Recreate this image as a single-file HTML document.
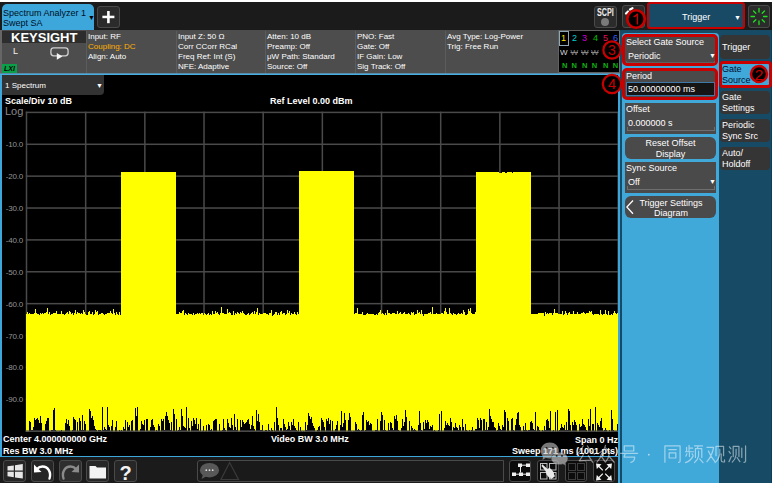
<!DOCTYPE html>
<html><head><meta charset="utf-8">
<style>
*{margin:0;padding:0;box-sizing:border-box}
html,body{width:773px;height:485px;overflow:hidden;background:#fff}
body{position:relative;font-family:"Liberation Sans",sans-serif;color:#fff}
.a{position:absolute}
.t{position:absolute;white-space:nowrap;line-height:1}
.yl{position:absolute;left:2px;width:21px;text-align:right;font-size:8px;letter-spacing:-0.2px;color:#959595;line-height:12px;white-space:nowrap}
.ann{position:absolute;overflow:visible}
.hd{position:absolute;font-size:8px;line-height:10px;color:#fff;white-space:nowrap;top:32px!important}
.sep{position:absolute;top:31px;width:1px;height:42px;background:#5c5c5c}
.sk{position:absolute;left:720px;width:50px;background:#353535;border-radius:4px;font-size:9px;line-height:11px;padding:1px 0 0 2px;color:#fff}
.ctl{position:absolute;left:625px;width:91px;background:#4a4a4a;font-size:9px;color:#fff}
.btn{position:absolute;background:#2b2b2b;border:1px solid #4a4a4a;border-radius:3px}
</style></head><body>
<!-- top bar -->
<div class="a" style="left:0;top:2px;width:772px;height:28px;background:#1b1b1b"></div>
<div class="a" style="left:2px;top:4px;width:92px;height:27px;background:#3da7db;border-radius:5px 5px 0 0"></div>
<div class="t" style="left:3px;top:8px;font-size:9px;color:#001028;line-height:10px">Spectrum Analyzer 1<br>Swept SA</div>
<div class="t" style="left:88px;top:14px;font-size:7px;color:#000">&#9660;</div>
<div class="btn" style="left:97px;top:6px;width:23px;height:22px"></div>
<svg class="a" style="left:97px;top:6px" width="23" height="22"><rect x="5.4" y="9.7" width="12" height="2.5" fill="#fff"/><rect x="10.1" y="5" width="2.6" height="12.2" fill="#fff"/></svg>

<div class="btn" style="left:594px;top:6px;width:23px;height:22px"></div>
<div class="t" style="left:597px;top:8px;font-size:10px;font-weight:bold;color:#eee;transform:scaleX(0.72);transform-origin:0 0">SCPI</div>
<div class="a" style="left:601px;top:18px;width:8px;height:8px;border-radius:50%;background:#7a7a7a"></div>
<div class="btn" style="left:622px;top:5px;width:23px;height:23px"></div>
<svg class="a" style="left:622px;top:5px" width="23" height="23"><path d="M4 8.5 L6 6.5 M8 4.5 L10.5 3.2" stroke="#fff" stroke-width="2.2" stroke-linecap="round"/></svg>

<div class="a" style="left:647px;top:2px;width:98px;height:27px;background:#184a66;border:2.5px solid #c80000;border-radius:3px"></div>
<div class="t" style="left:682px;top:13px;font-size:9px;color:#fff">Trigger</div>
<div class="t" style="left:734px;top:14px;font-size:7px;color:#fff">&#9660;</div>
<div class="btn" style="left:748px;top:5px;width:22px;height:23px"></div>
<svg class="a" style="left:748px;top:5px" width="22" height="23" viewBox="0 0 22 23">
<g stroke="#1ee01e" stroke-width="1.3" stroke-linecap="round">
<line x1="11" y1="3.5" x2="11" y2="7"/><line x1="11" y1="16" x2="11" y2="19.5"/>
<line x1="3" y1="11.5" x2="6.5" y2="11.5"/><line x1="15.5" y1="11.5" x2="19" y2="11.5"/>
<line x1="5.5" y1="6" x2="7.8" y2="8.3"/><line x1="14.2" y1="14.7" x2="16.5" y2="17"/>
<line x1="16.5" y1="6" x2="14.2" y2="8.3"/><line x1="7.8" y1="14.7" x2="5.5" y2="17"/>
</g></svg>

<!-- header -->
<div class="a" style="left:0;top:30px;width:620px;height:43px;background:#4d4d4d"></div>
<div class="a" style="left:0;top:30px;width:2px;height:43px;background:#666"></div>
<div class="a" style="left:2px;top:31px;width:84px;height:12px;background:#2d2d2d"></div>
<div class="t" style="left:11px;top:31px;font-size:13px;font-weight:bold;color:#fff;line-height:13px">KEYSIGHT</div>
<div class="t" style="left:13px;top:47px;font-size:9px;color:#f0f0f0">L</div>
<svg class="a" style="left:44px;top:42px" width="30" height="20" viewBox="44 42 30 20"><rect x="50.9" y="47.9" width="17.2" height="8" rx="2.8" fill="none" stroke="#d0d0d0" stroke-width="1.3"/><path d="M56.8 53 L56.8 59.8 L62.4 56.4 Z" fill="#f4f4f4"/></svg>
<div class="a" style="left:2px;top:64px;width:15px;height:9px;background:#0aa04a"></div>
<div class="t" style="left:4px;top:65px;font-size:7px;font-style:italic;font-weight:bold;color:#000">LXI</div>
<div class="sep" style="left:86px"></div>
<div class="sep" style="left:176px"></div>
<div class="sep" style="left:265px"></div>
<div class="sep" style="left:355px"></div>
<div class="sep" style="left:445px"></div>
<div class="hd" style="left:88px;top:31px">Input: RF<br><span style="color:#ffb000">Coupling: DC</span><br>Align: Auto</div>
<div class="hd" style="left:178px;top:31px">Input Z: 50 &#937;<br>Corr CCorr RCal<br>Freq Ref: Int (S)<br>NFE: Adaptive</div>
<div class="hd" style="left:267px;top:31px">Atten: 10 dB<br>Preamp: Off<br>&#956;W Path: Standard<br>Source: Off</div>
<div class="hd" style="left:357px;top:31px">PNO: Fast<br>Gate: Off<br>IF Gain: Low<br>Sig Track: Off</div>
<div class="hd" style="left:447px;top:31px">Avg Type: Log-Power<br>Trig: Free Run</div>
<!-- trace indicator -->
<div class="a" style="left:558px;top:30px;width:62px;height:43px;background:#000;border:1px solid #606060;border-right:1px solid #707070"></div>
<div class="a" style="left:559px;top:31px;width:10px;height:15px;border:1px solid #8fa8b8"></div>
<div class="t" style="left:561px;top:34px;font-size:9px;color:#ffe000">1</div>
<div class="t" style="left:572px;top:34px;font-size:9px;color:#00d0d0">2</div>
<div class="t" style="left:582px;top:34px;font-size:9px;color:#d000d0">3</div>
<div class="t" style="left:593px;top:34px;font-size:9px;color:#00c000">4</div>
<div class="t" style="left:603px;top:34px;font-size:9px;color:#e0105a">5</div>
<div class="t" style="left:613px;top:34px;font-size:9px;color:#3060ff">6</div>
<div class="t" style="left:560px;top:49px;font-size:8px;color:#ddd">W</div>
<div class="t" style="left:570.5px;top:49px;font-size:8px;color:#888;text-decoration:line-through">W</div>
<div class="t" style="left:581px;top:49px;font-size:8px;color:#888;text-decoration:line-through">W</div>
<div class="t" style="left:591px;top:49px;font-size:8px;color:#888;text-decoration:line-through">W</div>
<div class="t" style="left:562px;top:62px;font-size:7.5px;font-weight:bold;color:#10b010">N</div>
<div class="t" style="left:571.6px;top:62px;font-size:7.5px;font-weight:bold;color:#10b010">N</div>
<div class="t" style="left:582px;top:62px;font-size:7.5px;font-weight:bold;color:#10b010">N</div>
<div class="t" style="left:591.7px;top:62px;font-size:7.5px;font-weight:bold;color:#10b010">N</div>
<div class="t" style="left:603px;top:62px;font-size:7.5px;font-weight:bold;color:#10b010">N</div>
<div class="t" style="left:612.8px;top:62px;font-size:7.5px;font-weight:bold;color:#10b010">N</div>

<!-- blue line -->
<div class="a" style="left:0;top:73px;width:620px;height:1px;background:#5a8aa5"></div>
<div class="a" style="left:0;top:74px;width:620px;height:1px;background:#45aee0"></div>
<!-- plot area -->
<div class="a" style="left:0;top:75px;width:620px;height:381px;background:#000"></div>
<div class="a" style="left:0;top:75px;width:2px;height:383px;background:#3da7db"></div>
<div class="a" style="left:2px;top:75px;width:102px;height:20px;background:#333;border-radius:0 0 4px 0"></div>
<div class="t" style="left:5px;top:82px;font-size:8px;color:#fff">1 Spectrum</div>
<div class="t" style="left:96px;top:82px;font-size:7px;color:#fff">&#9660;</div>
<div class="t" style="left:5px;top:97px;font-size:9px;font-weight:bold;color:#fff">Scale/Div 10 dB</div>
<div class="t" style="left:5px;top:106px;font-size:11px;color:#8a8a8a">Log</div>
<div class="t" style="left:270px;top:97px;font-size:9px;font-weight:bold;color:#fff">Ref Level 0.00 dBm</div>
<svg class="a" style="left:0;top:0" width="620" height="456" viewBox="0 0 620 456">
<g fill="#4a4a4a"><rect x="25.75" y="111.65" width="1.5" height="320.25"/><rect x="84.92" y="111.65" width="1.5" height="320.25"/><rect x="144.09" y="111.65" width="1.5" height="320.25"/><rect x="203.26" y="111.65" width="1.5" height="320.25"/><rect x="262.43" y="111.65" width="1.5" height="320.25"/><rect x="321.60" y="111.65" width="1.5" height="320.25"/><rect x="380.77" y="111.65" width="1.5" height="320.25"/><rect x="439.94" y="111.65" width="1.5" height="320.25"/><rect x="499.11" y="111.65" width="1.5" height="320.25"/><rect x="558.28" y="111.65" width="1.5" height="320.25"/><rect x="617.45" y="111.65" width="1.5" height="320.25"/><rect x="25.75" y="111.65" width="592.5" height="1.5"/><rect x="25.75" y="143.53" width="592.5" height="1.5"/><rect x="25.75" y="175.40" width="592.5" height="1.5"/><rect x="25.75" y="207.28" width="592.5" height="1.5"/><rect x="25.75" y="239.15" width="592.5" height="1.5"/><rect x="25.75" y="271.02" width="592.5" height="1.5"/><rect x="25.75" y="302.90" width="592.5" height="1.5"/><rect x="25.75" y="334.77" width="592.5" height="1.5"/><rect x="25.75" y="366.65" width="592.5" height="1.5"/><rect x="25.75" y="398.52" width="592.5" height="1.5"/><rect x="25.75" y="430.40" width="592.5" height="1.5"/></g>
<path d="M26 432 L26 314 L27 314 L27 312 L28 312 L28 314 L29 314 L29 313 L30 313 L30 314 L31 314 L31 314 L32 314 L32 314 L33 314 L33 314 L34 314 L34 313 L35 313 L35 309 L36 309 L36 313 L37 313 L37 314 L38 314 L38 314 L39 314 L39 315 L40 315 L40 313 L41 313 L41 314 L42 314 L42 313 L43 313 L43 314 L44 314 L44 313 L45 313 L45 313 L46 313 L46 312 L47 312 L47 308 L48 308 L48 314 L49 314 L49 312 L50 312 L50 315 L51 315 L51 314 L52 314 L52 314 L53 314 L53 313 L54 313 L54 313 L55 313 L55 313 L56 313 L56 311 L57 311 L57 314 L58 314 L58 314 L59 314 L59 314 L60 314 L60 314 L61 314 L61 311 L62 311 L62 314 L63 314 L63 314 L64 314 L64 315 L65 315 L65 314 L66 314 L66 313 L67 313 L67 312 L68 312 L68 314 L69 314 L69 311 L70 311 L70 312 L71 312 L71 314 L72 314 L72 313 L73 313 L73 315 L74 315 L74 313 L75 313 L75 310 L76 310 L76 314 L77 314 L77 312 L78 312 L78 313 L79 313 L79 313 L80 313 L80 314 L81 314 L81 313 L82 313 L82 314 L83 314 L83 310 L84 310 L84 312 L85 312 L85 314 L86 314 L86 315 L87 315 L87 315 L88 315 L88 312 L89 312 L89 311 L90 311 L90 314 L91 314 L91 314 L92 314 L92 312 L93 312 L93 315 L94 315 L94 314 L95 314 L95 310 L96 310 L96 312 L97 312 L97 311 L98 311 L98 315 L99 315 L99 314 L100 314 L100 314 L101 314 L101 313 L102 313 L102 313 L103 313 L103 314 L104 314 L104 315 L105 315 L105 314 L106 314 L106 314 L107 314 L107 313 L108 313 L108 313 L109 313 L109 313 L110 313 L110 311 L111 311 L111 313 L112 313 L112 314 L113 314 L113 309 L114 309 L114 313 L115 313 L115 315 L116 315 L116 312 L117 312 L117 314 L118 314 L118 315 L119 315 L119 312 L120 312 L120 315 L121 315 L121 172 L122 172 L122 172 L123 172 L123 172 L124 172 L124 172 L125 172 L125 172 L126 172 L126 172 L127 172 L127 172 L128 172 L128 172 L129 172 L129 172 L130 172 L130 172 L131 172 L131 172 L132 172 L132 172 L133 172 L133 172 L134 172 L134 172 L135 172 L135 172 L136 172 L136 172 L137 172 L137 172 L138 172 L138 172 L139 172 L139 172 L140 172 L140 172 L141 172 L141 172 L142 172 L142 172 L143 172 L143 172 L144 172 L144 172 L145 172 L145 172 L146 172 L146 172 L147 172 L147 172 L148 172 L148 172 L149 172 L149 172 L150 172 L150 172 L151 172 L151 172 L152 172 L152 172 L153 172 L153 172 L154 172 L154 172 L155 172 L155 172 L156 172 L156 172 L157 172 L157 172 L158 172 L158 172 L159 172 L159 172 L160 172 L160 172 L161 172 L161 172 L162 172 L162 172 L163 172 L163 172 L164 172 L164 172 L165 172 L165 172 L166 172 L166 172 L167 172 L167 172 L168 172 L168 172 L169 172 L169 172 L170 172 L170 172 L171 172 L171 172 L172 172 L172 172 L173 172 L173 172 L174 172 L174 172 L175 172 L175 172 L176 172 L176 314 L177 314 L177 314 L178 314 L178 314 L179 314 L179 312 L180 312 L180 313 L181 313 L181 313 L182 313 L182 311 L183 311 L183 310 L184 310 L184 315 L185 315 L185 313 L186 313 L186 314 L187 314 L187 315 L188 315 L188 313 L189 313 L189 314 L190 314 L190 314 L191 314 L191 314 L192 314 L192 315 L193 315 L193 313 L194 313 L194 315 L195 315 L195 314 L196 314 L196 314 L197 314 L197 313 L198 313 L198 314 L199 314 L199 313 L200 313 L200 314 L201 314 L201 313 L202 313 L202 313 L203 313 L203 315 L204 315 L204 313 L205 313 L205 314 L206 314 L206 315 L207 315 L207 314 L208 314 L208 313 L209 313 L209 315 L210 315 L210 314 L211 314 L211 315 L212 315 L212 311 L213 311 L213 314 L214 314 L214 314 L215 314 L215 311 L216 311 L216 313 L217 313 L217 312 L218 312 L218 314 L219 314 L219 315 L220 315 L220 313 L221 313 L221 307 L222 307 L222 313 L223 313 L223 313 L224 313 L224 314 L225 314 L225 314 L226 314 L226 314 L227 314 L227 309 L228 309 L228 313 L229 313 L229 312 L230 312 L230 313 L231 313 L231 315 L232 315 L232 315 L233 315 L233 311 L234 311 L234 315 L235 315 L235 313 L236 313 L236 314 L237 314 L237 312 L238 312 L238 313 L239 313 L239 314 L240 314 L240 312 L241 312 L241 313 L242 313 L242 311 L243 311 L243 313 L244 313 L244 314 L245 314 L245 315 L246 315 L246 315 L247 315 L247 314 L248 314 L248 313 L249 313 L249 315 L250 315 L250 314 L251 314 L251 313 L252 313 L252 312 L253 312 L253 314 L254 314 L254 311 L255 311 L255 314 L256 314 L256 312 L257 312 L257 308 L258 308 L258 315 L259 315 L259 313 L260 313 L260 314 L261 314 L261 314 L262 314 L262 314 L263 314 L263 313 L264 313 L264 313 L265 313 L265 313 L266 313 L266 314 L267 314 L267 314 L268 314 L268 315 L269 315 L269 313 L270 313 L270 313 L271 313 L271 310 L272 310 L272 316 L273 316 L273 315 L274 315 L274 314 L275 314 L275 312 L276 312 L276 312 L277 312 L277 315 L278 315 L278 313 L279 313 L279 315 L280 315 L280 312 L281 312 L281 311 L282 311 L282 314 L283 314 L283 313 L284 313 L284 313 L285 313 L285 315 L286 315 L286 314 L287 314 L287 310 L288 310 L288 313 L289 313 L289 311 L290 311 L290 315 L291 315 L291 313 L292 313 L292 314 L293 314 L293 314 L294 314 L294 312 L295 312 L295 314 L296 314 L296 315 L297 315 L297 312 L298 312 L298 314 L299 314 L299 171 L300 171 L300 171 L301 171 L301 171 L302 171 L302 171 L303 171 L303 171 L304 171 L304 171 L305 171 L305 171 L306 171 L306 171 L307 171 L307 171 L308 171 L308 171 L309 171 L309 171 L310 171 L310 171 L311 171 L311 171 L312 171 L312 171 L313 171 L313 171 L314 171 L314 171 L315 171 L315 171 L316 171 L316 171 L317 171 L317 171 L318 171 L318 171 L319 171 L319 171 L320 171 L320 171 L321 171 L321 171 L322 171 L322 171 L323 171 L323 171 L324 171 L324 171 L325 171 L325 171 L326 171 L326 171 L327 171 L327 171 L328 171 L328 171 L329 171 L329 171 L330 171 L330 171 L331 171 L331 171 L332 171 L332 171 L333 171 L333 171 L334 171 L334 171 L335 171 L335 171 L336 171 L336 171 L337 171 L337 171 L338 171 L338 171 L339 171 L339 171 L340 171 L340 171 L341 171 L341 171 L342 171 L342 171 L343 171 L343 171 L344 171 L344 171 L345 171 L345 171 L346 171 L346 171 L347 171 L347 171 L348 171 L348 171 L349 171 L349 171 L350 171 L350 171 L351 171 L351 171 L352 171 L352 171 L353 171 L353 171 L354 171 L354 314 L355 314 L355 313 L356 313 L356 313 L357 313 L357 308 L358 308 L358 314 L359 314 L359 314 L360 314 L360 314 L361 314 L361 314 L362 314 L362 312 L363 312 L363 315 L364 315 L364 315 L365 315 L365 315 L366 315 L366 314 L367 314 L367 313 L368 313 L368 314 L369 314 L369 314 L370 314 L370 314 L371 314 L371 314 L372 314 L372 314 L373 314 L373 314 L374 314 L374 315 L375 315 L375 315 L376 315 L376 314 L377 314 L377 315 L378 315 L378 313 L379 313 L379 312 L380 312 L380 310 L381 310 L381 314 L382 314 L382 313 L383 313 L383 314 L384 314 L384 315 L385 315 L385 313 L386 313 L386 315 L387 315 L387 310 L388 310 L388 313 L389 313 L389 313 L390 313 L390 314 L391 314 L391 314 L392 314 L392 313 L393 313 L393 313 L394 313 L394 313 L395 313 L395 314 L396 314 L396 314 L397 314 L397 311 L398 311 L398 314 L399 314 L399 313 L400 313 L400 312 L401 312 L401 314 L402 314 L402 314 L403 314 L403 313 L404 313 L404 312 L405 312 L405 314 L406 314 L406 314 L407 314 L407 314 L408 314 L408 313 L409 313 L409 314 L410 314 L410 315 L411 315 L411 312 L412 312 L412 313 L413 313 L413 312 L414 312 L414 315 L415 315 L415 314 L416 314 L416 314 L417 314 L417 310 L418 310 L418 313 L419 313 L419 312 L420 312 L420 314 L421 314 L421 310 L422 310 L422 314 L423 314 L423 316 L424 316 L424 314 L425 314 L425 314 L426 314 L426 314 L427 314 L427 314 L428 314 L428 313 L429 313 L429 313 L430 313 L430 312 L431 312 L431 314 L432 314 L432 307 L433 307 L433 314 L434 314 L434 314 L435 314 L435 314 L436 314 L436 313 L437 313 L437 314 L438 314 L438 314 L439 314 L439 314 L440 314 L440 314 L441 314 L441 313 L442 313 L442 313 L443 313 L443 314 L444 314 L444 311 L445 311 L445 308 L446 308 L446 312 L447 312 L447 314 L448 314 L448 314 L449 314 L449 308 L450 308 L450 313 L451 313 L451 314 L452 314 L452 315 L453 315 L453 313 L454 313 L454 314 L455 314 L455 314 L456 314 L456 315 L457 315 L457 314 L458 314 L458 313 L459 313 L459 314 L460 314 L460 314 L461 314 L461 313 L462 313 L462 314 L463 314 L463 310 L464 310 L464 312 L465 312 L465 315 L466 315 L466 315 L467 315 L467 314 L468 314 L468 309 L469 309 L469 311 L470 311 L470 308 L471 308 L471 313 L472 313 L472 314 L473 314 L473 314 L474 314 L474 314 L475 314 L475 312 L476 312 L476 172 L477 172 L477 172 L478 172 L478 172 L479 172 L479 172 L480 172 L480 172 L481 172 L481 172 L482 172 L482 172 L483 172 L483 172 L484 172 L484 172 L485 172 L485 172 L486 172 L486 172 L487 172 L487 172 L488 172 L488 172 L489 172 L489 172 L490 172 L490 172 L491 172 L491 172 L492 172 L492 172 L493 172 L493 172 L494 172 L494 172 L495 172 L495 172 L496 172 L496 172 L497 172 L497 172 L498 172 L498 172 L499 172 L499 173 L500 173 L500 173 L501 173 L501 173 L502 173 L502 172 L503 172 L503 172 L504 172 L504 172 L505 172 L505 173 L506 173 L506 173 L507 173 L507 172 L508 172 L508 172 L509 172 L509 172 L510 172 L510 172 L511 172 L511 172 L512 172 L512 173 L513 173 L513 172 L514 172 L514 172 L515 172 L515 172 L516 172 L516 172 L517 172 L517 172 L518 172 L518 172 L519 172 L519 172 L520 172 L520 172 L521 172 L521 172 L522 172 L522 172 L523 172 L523 172 L524 172 L524 172 L525 172 L525 172 L526 172 L526 172 L527 172 L527 172 L528 172 L528 172 L529 172 L529 172 L530 172 L530 172 L531 172 L531 314 L532 314 L532 314 L533 314 L533 314 L534 314 L534 314 L535 314 L535 314 L536 314 L536 314 L537 314 L537 314 L538 314 L538 313 L539 313 L539 313 L540 313 L540 313 L541 313 L541 313 L542 313 L542 313 L543 313 L543 313 L544 313 L544 316 L545 316 L545 312 L546 312 L546 314 L547 314 L547 313 L548 313 L548 314 L549 314 L549 313 L550 313 L550 313 L551 313 L551 313 L552 313 L552 315 L553 315 L553 313 L554 313 L554 309 L555 309 L555 313 L556 313 L556 313 L557 313 L557 313 L558 313 L558 314 L559 314 L559 314 L560 314 L560 314 L561 314 L561 314 L562 314 L562 311 L563 311 L563 315 L564 315 L564 314 L565 314 L565 311 L566 311 L566 313 L567 313 L567 315 L568 315 L568 313 L569 313 L569 312 L570 312 L570 314 L571 314 L571 314 L572 314 L572 314 L573 314 L573 311 L574 311 L574 314 L575 314 L575 314 L576 314 L576 314 L577 314 L577 312 L578 312 L578 314 L579 314 L579 314 L580 314 L580 314 L581 314 L581 313 L582 313 L582 313 L583 313 L583 312 L584 312 L584 313 L585 313 L585 314 L586 314 L586 313 L587 313 L587 313 L588 313 L588 313 L589 313 L589 311 L590 311 L590 312 L591 312 L591 311 L592 311 L592 314 L593 314 L593 315 L594 315 L594 314 L595 314 L595 314 L596 314 L596 314 L597 314 L597 314 L598 314 L598 314 L599 314 L599 315 L600 315 L600 310 L601 310 L601 314 L602 314 L602 315 L603 315 L603 314 L604 314 L604 314 L605 314 L605 310 L606 310 L606 314 L607 314 L607 315 L608 315 L608 311 L609 311 L609 315 L610 315 L610 315 L611 315 L611 314 L612 314 L612 315 L613 315 L613 313 L614 313 L614 311 L615 311 L615 313 L616 313 L616 314 L617 314 L617 313 L618 313 L618 432 Z" fill="#ffff00"/>
<g fill="#000"><rect x="29" y="421" width="1" height="11"/><rect x="30" y="422" width="1" height="10"/><rect x="31" y="430" width="1" height="2"/><rect x="32" y="430" width="1" height="2"/><rect x="33" y="427" width="1" height="5"/><rect x="34" y="418" width="1" height="14"/><rect x="35" y="420" width="1" height="12"/><rect x="36" y="419" width="1" height="13"/><rect x="37" y="418" width="1" height="14"/><rect x="38" y="420" width="1" height="12"/><rect x="39" y="423" width="1" height="9"/><rect x="40" y="416" width="1" height="16"/><rect x="41" y="423" width="1" height="9"/><rect x="43" y="431" width="1" height="1"/><rect x="44" y="431" width="1" height="1"/><rect x="45" y="424" width="1" height="8"/><rect x="46" y="421" width="1" height="11"/><rect x="47" y="418" width="1" height="14"/><rect x="48" y="418" width="1" height="14"/><rect x="49" y="431" width="1" height="1"/><rect x="51" y="430" width="1" height="2"/><rect x="52" y="430" width="1" height="2"/><rect x="53" y="410" width="1" height="22"/><rect x="54" y="408" width="1" height="24"/><rect x="55" y="430" width="1" height="2"/><rect x="56" y="431" width="1" height="1"/><rect x="59" y="431" width="1" height="1"/><rect x="60" y="431" width="1" height="1"/><rect x="61" y="430" width="1" height="2"/><rect x="65" y="423" width="1" height="9"/><rect x="66" y="419" width="1" height="13"/><rect x="67" y="424" width="1" height="8"/><rect x="68" y="420" width="1" height="12"/><rect x="69" y="426" width="1" height="6"/><rect x="72" y="430" width="1" height="2"/><rect x="73" y="417" width="1" height="15"/><rect x="74" y="419" width="1" height="13"/><rect x="75" y="420" width="1" height="12"/><rect x="77" y="422" width="1" height="10"/><rect x="78" y="431" width="1" height="1"/><rect x="79" y="418" width="1" height="14"/><rect x="80" y="421" width="1" height="11"/><rect x="81" y="430" width="1" height="2"/><rect x="82" y="415" width="1" height="17"/><rect x="83" y="430" width="1" height="2"/><rect x="84" y="421" width="1" height="11"/><rect x="85" y="424" width="1" height="8"/><rect x="88" y="431" width="1" height="1"/><rect x="89" y="409" width="1" height="23"/><rect x="90" y="411" width="1" height="21"/><rect x="91" y="418" width="1" height="14"/><rect x="92" y="416" width="1" height="16"/><rect x="93" y="420" width="1" height="12"/><rect x="94" y="426" width="1" height="6"/><rect x="95" y="429" width="1" height="3"/><rect x="96" y="430" width="1" height="2"/><rect x="98" y="430" width="1" height="2"/><rect x="99" y="430" width="1" height="2"/><rect x="100" y="430" width="1" height="2"/><rect x="101" y="431" width="1" height="1"/><rect x="102" y="407" width="1" height="25"/><rect x="103" y="430" width="1" height="2"/><rect x="104" y="427" width="1" height="5"/><rect x="105" y="429" width="1" height="3"/><rect x="106" y="430" width="1" height="2"/><rect x="107" y="407" width="1" height="25"/><rect x="108" y="425" width="1" height="7"/><rect x="109" y="427" width="1" height="5"/><rect x="110" y="431" width="1" height="1"/><rect x="111" y="426" width="1" height="6"/><rect x="112" y="420" width="1" height="12"/><rect x="115" y="427" width="1" height="5"/><rect x="116" y="421" width="1" height="11"/><rect x="119" y="430" width="1" height="2"/><rect x="120" y="431" width="1" height="1"/><rect x="121" y="430" width="1" height="2"/><rect x="122" y="431" width="1" height="1"/><rect x="123" y="427" width="1" height="5"/><rect x="124" y="429" width="1" height="3"/><rect x="125" y="420" width="1" height="12"/><rect x="126" y="431" width="1" height="1"/><rect x="127" y="422" width="1" height="10"/><rect x="128" y="427" width="1" height="5"/><rect x="129" y="425" width="1" height="7"/><rect x="130" y="431" width="1" height="1"/><rect x="131" y="421" width="1" height="11"/><rect x="132" y="420" width="1" height="12"/><rect x="133" y="431" width="1" height="1"/><rect x="135" y="408" width="1" height="24"/><rect x="136" y="416" width="1" height="16"/><rect x="137" y="407" width="1" height="25"/><rect x="140" y="429" width="1" height="3"/><rect x="141" y="421" width="1" height="11"/><rect x="142" y="424" width="1" height="8"/><rect x="143" y="425" width="1" height="7"/><rect x="144" y="420" width="1" height="12"/><rect x="146" y="419" width="1" height="13"/><rect x="147" y="419" width="1" height="13"/><rect x="148" y="431" width="1" height="1"/><rect x="149" y="431" width="1" height="1"/><rect x="150" y="427" width="1" height="5"/><rect x="151" y="420" width="1" height="12"/><rect x="152" y="419" width="1" height="13"/><rect x="153" y="425" width="1" height="7"/><rect x="154" y="427" width="1" height="5"/><rect x="156" y="430" width="1" height="2"/><rect x="157" y="431" width="1" height="1"/><rect x="158" y="424" width="1" height="8"/><rect x="159" y="426" width="1" height="6"/><rect x="161" y="419" width="1" height="13"/><rect x="162" y="421" width="1" height="11"/><rect x="163" y="419" width="1" height="13"/><rect x="164" y="430" width="1" height="2"/><rect x="165" y="416" width="1" height="16"/><rect x="166" y="412" width="1" height="20"/><rect x="167" y="416" width="1" height="16"/><rect x="168" y="420" width="1" height="12"/><rect x="169" y="423" width="1" height="9"/><rect x="170" y="430" width="1" height="2"/><rect x="171" y="422" width="1" height="10"/><rect x="172" y="431" width="1" height="1"/><rect x="173" y="409" width="1" height="23"/><rect x="174" y="414" width="1" height="18"/><rect x="175" y="431" width="1" height="1"/><rect x="176" y="419" width="1" height="13"/><rect x="177" y="431" width="1" height="1"/><rect x="178" y="430" width="1" height="2"/><rect x="179" y="427" width="1" height="5"/><rect x="180" y="430" width="1" height="2"/><rect x="181" y="409" width="1" height="23"/><rect x="182" y="416" width="1" height="16"/><rect x="183" y="426" width="1" height="6"/><rect x="184" y="427" width="1" height="5"/><rect x="185" y="428" width="1" height="4"/><rect x="186" y="407" width="1" height="25"/><rect x="187" y="431" width="1" height="1"/><rect x="188" y="418" width="1" height="14"/><rect x="189" y="428" width="1" height="4"/><rect x="191" y="421" width="1" height="11"/><rect x="192" y="426" width="1" height="6"/><rect x="193" y="418" width="1" height="14"/><rect x="194" y="420" width="1" height="12"/><rect x="195" y="424" width="1" height="8"/><rect x="196" y="418" width="1" height="14"/><rect x="197" y="429" width="1" height="3"/><rect x="198" y="424" width="1" height="8"/><rect x="199" y="431" width="1" height="1"/><rect x="200" y="419" width="1" height="13"/><rect x="202" y="431" width="1" height="1"/><rect x="203" y="426" width="1" height="6"/><rect x="205" y="431" width="1" height="1"/><rect x="206" y="425" width="1" height="7"/><rect x="208" y="424" width="1" height="8"/><rect x="209" y="425" width="1" height="7"/><rect x="210" y="430" width="1" height="2"/><rect x="211" y="429" width="1" height="3"/><rect x="212" y="431" width="1" height="1"/><rect x="213" y="421" width="1" height="11"/><rect x="214" y="420" width="1" height="12"/><rect x="215" y="419" width="1" height="13"/><rect x="216" y="419" width="1" height="13"/><rect x="219" y="424" width="1" height="8"/><rect x="220" y="431" width="1" height="1"/><rect x="221" y="431" width="1" height="1"/><rect x="222" y="430" width="1" height="2"/><rect x="223" y="419" width="1" height="13"/><rect x="224" y="428" width="1" height="4"/><rect x="225" y="430" width="1" height="2"/><rect x="227" y="419" width="1" height="13"/><rect x="228" y="423" width="1" height="9"/><rect x="229" y="427" width="1" height="5"/><rect x="230" y="428" width="1" height="4"/><rect x="231" y="418" width="1" height="14"/><rect x="232" y="425" width="1" height="7"/><rect x="233" y="430" width="1" height="2"/><rect x="234" y="414" width="1" height="18"/><rect x="235" y="427" width="1" height="5"/><rect x="236" y="430" width="1" height="2"/><rect x="237" y="419" width="1" height="13"/><rect x="240" y="420" width="1" height="12"/><rect x="241" y="427" width="1" height="5"/><rect x="242" y="420" width="1" height="12"/><rect x="243" y="422" width="1" height="10"/><rect x="244" y="424" width="1" height="8"/><rect x="245" y="423" width="1" height="9"/><rect x="246" y="422" width="1" height="10"/><rect x="247" y="420" width="1" height="12"/><rect x="248" y="419" width="1" height="13"/><rect x="249" y="424" width="1" height="8"/><rect x="250" y="429" width="1" height="3"/><rect x="251" y="425" width="1" height="7"/><rect x="252" y="416" width="1" height="16"/><rect x="253" y="426" width="1" height="6"/><rect x="254" y="429" width="1" height="3"/><rect x="255" y="431" width="1" height="1"/><rect x="256" y="410" width="1" height="22"/><rect x="257" y="421" width="1" height="11"/><rect x="258" y="414" width="1" height="18"/><rect x="259" y="422" width="1" height="10"/><rect x="260" y="430" width="1" height="2"/><rect x="261" y="430" width="1" height="2"/><rect x="262" y="425" width="1" height="7"/><rect x="263" y="431" width="1" height="1"/><rect x="264" y="431" width="1" height="1"/><rect x="265" y="430" width="1" height="2"/><rect x="266" y="430" width="1" height="2"/><rect x="267" y="431" width="1" height="1"/><rect x="268" y="424" width="1" height="8"/><rect x="269" y="430" width="1" height="2"/><rect x="270" y="431" width="1" height="1"/><rect x="271" y="428" width="1" height="4"/><rect x="272" y="430" width="1" height="2"/><rect x="274" y="422" width="1" height="10"/><rect x="275" y="431" width="1" height="1"/><rect x="276" y="407" width="1" height="25"/><rect x="277" y="418" width="1" height="14"/><rect x="278" y="425" width="1" height="7"/><rect x="279" y="431" width="1" height="1"/><rect x="280" y="428" width="1" height="4"/><rect x="281" y="428" width="1" height="4"/><rect x="282" y="431" width="1" height="1"/><rect x="283" y="419" width="1" height="13"/><rect x="284" y="424" width="1" height="8"/><rect x="285" y="427" width="1" height="5"/><rect x="286" y="430" width="1" height="2"/><rect x="287" y="429" width="1" height="3"/><rect x="288" y="422" width="1" height="10"/><rect x="289" y="426" width="1" height="6"/><rect x="290" y="430" width="1" height="2"/><rect x="291" y="422" width="1" height="10"/><rect x="292" y="425" width="1" height="7"/><rect x="293" y="419" width="1" height="13"/><rect x="294" y="426" width="1" height="6"/><rect x="295" y="428" width="1" height="4"/><rect x="296" y="430" width="1" height="2"/><rect x="297" y="431" width="1" height="1"/><rect x="298" y="422" width="1" height="10"/><rect x="300" y="427" width="1" height="5"/><rect x="301" y="431" width="1" height="1"/><rect x="303" y="431" width="1" height="1"/><rect x="305" y="422" width="1" height="10"/><rect x="306" y="430" width="1" height="2"/><rect x="307" y="425" width="1" height="7"/><rect x="308" y="413" width="1" height="19"/><rect x="309" y="416" width="1" height="16"/><rect x="310" y="419" width="1" height="13"/><rect x="311" y="417" width="1" height="15"/><rect x="312" y="423" width="1" height="9"/><rect x="313" y="426" width="1" height="6"/><rect x="314" y="428" width="1" height="4"/><rect x="317" y="430" width="1" height="2"/><rect x="318" y="427" width="1" height="5"/><rect x="319" y="426" width="1" height="6"/><rect x="321" y="418" width="1" height="14"/><rect x="322" y="420" width="1" height="12"/><rect x="323" y="422" width="1" height="10"/><rect x="324" y="427" width="1" height="5"/><rect x="326" y="419" width="1" height="13"/><rect x="327" y="421" width="1" height="11"/><rect x="328" y="418" width="1" height="14"/><rect x="329" y="424" width="1" height="8"/><rect x="330" y="420" width="1" height="12"/><rect x="332" y="421" width="1" height="11"/><rect x="335" y="429" width="1" height="3"/><rect x="336" y="425" width="1" height="7"/><rect x="337" y="421" width="1" height="11"/><rect x="340" y="425" width="1" height="7"/><rect x="341" y="411" width="1" height="21"/><rect x="342" y="427" width="1" height="5"/><rect x="343" y="423" width="1" height="9"/><rect x="344" y="413" width="1" height="19"/><rect x="345" y="420" width="1" height="12"/><rect x="348" y="420" width="1" height="12"/><rect x="349" y="413" width="1" height="19"/><rect x="350" y="417" width="1" height="15"/><rect x="351" y="431" width="1" height="1"/><rect x="353" y="431" width="1" height="1"/><rect x="354" y="431" width="1" height="1"/><rect x="355" y="422" width="1" height="10"/><rect x="356" y="424" width="1" height="8"/><rect x="357" y="430" width="1" height="2"/><rect x="358" y="429" width="1" height="3"/><rect x="359" y="430" width="1" height="2"/><rect x="360" y="431" width="1" height="1"/><rect x="361" y="430" width="1" height="2"/><rect x="362" y="415" width="1" height="17"/><rect x="363" y="412" width="1" height="20"/><rect x="364" y="431" width="1" height="1"/><rect x="365" y="430" width="1" height="2"/><rect x="366" y="420" width="1" height="12"/><rect x="367" y="422" width="1" height="10"/><rect x="368" y="421" width="1" height="11"/><rect x="369" y="425" width="1" height="7"/><rect x="370" y="423" width="1" height="9"/><rect x="371" y="424" width="1" height="8"/><rect x="372" y="431" width="1" height="1"/><rect x="375" y="430" width="1" height="2"/><rect x="376" y="430" width="1" height="2"/><rect x="377" y="419" width="1" height="13"/><rect x="378" y="431" width="1" height="1"/><rect x="380" y="421" width="1" height="11"/><rect x="381" y="412" width="1" height="20"/><rect x="382" y="415" width="1" height="17"/><rect x="383" y="430" width="1" height="2"/><rect x="384" y="420" width="1" height="12"/><rect x="385" y="430" width="1" height="2"/><rect x="386" y="431" width="1" height="1"/><rect x="387" y="431" width="1" height="1"/><rect x="388" y="423" width="1" height="9"/><rect x="389" y="430" width="1" height="2"/><rect x="390" y="422" width="1" height="10"/><rect x="391" y="423" width="1" height="9"/><rect x="392" y="428" width="1" height="4"/><rect x="393" y="430" width="1" height="2"/><rect x="394" y="416" width="1" height="16"/><rect x="395" y="419" width="1" height="13"/><rect x="396" y="415" width="1" height="17"/><rect x="397" y="421" width="1" height="11"/><rect x="398" y="430" width="1" height="2"/><rect x="399" y="431" width="1" height="1"/><rect x="401" y="428" width="1" height="4"/><rect x="402" y="419" width="1" height="13"/><rect x="403" y="426" width="1" height="6"/><rect x="404" y="422" width="1" height="10"/><rect x="405" y="410" width="1" height="22"/><rect x="406" y="417" width="1" height="15"/><rect x="407" y="431" width="1" height="1"/><rect x="408" y="431" width="1" height="1"/><rect x="409" y="421" width="1" height="11"/><rect x="411" y="426" width="1" height="6"/><rect x="412" y="428" width="1" height="4"/><rect x="413" y="430" width="1" height="2"/><rect x="414" y="429" width="1" height="3"/><rect x="415" y="430" width="1" height="2"/><rect x="416" y="431" width="1" height="1"/><rect x="418" y="425" width="1" height="7"/><rect x="419" y="411" width="1" height="21"/><rect x="420" y="423" width="1" height="9"/><rect x="421" y="430" width="1" height="2"/><rect x="422" y="431" width="1" height="1"/><rect x="423" y="422" width="1" height="10"/><rect x="424" y="429" width="1" height="3"/><rect x="425" y="420" width="1" height="12"/><rect x="426" y="423" width="1" height="9"/><rect x="427" y="420" width="1" height="12"/><rect x="428" y="422" width="1" height="10"/><rect x="429" y="429" width="1" height="3"/><rect x="430" y="426" width="1" height="6"/><rect x="431" y="427" width="1" height="5"/><rect x="432" y="425" width="1" height="7"/><rect x="433" y="431" width="1" height="1"/><rect x="434" y="430" width="1" height="2"/><rect x="435" y="431" width="1" height="1"/><rect x="438" y="430" width="1" height="2"/><rect x="439" y="414" width="1" height="18"/><rect x="441" y="411" width="1" height="21"/><rect x="444" y="428" width="1" height="4"/><rect x="445" y="421" width="1" height="11"/><rect x="446" y="425" width="1" height="7"/><rect x="447" y="423" width="1" height="9"/><rect x="448" y="425" width="1" height="7"/><rect x="449" y="426" width="1" height="6"/><rect x="450" y="418" width="1" height="14"/><rect x="451" y="422" width="1" height="10"/><rect x="453" y="427" width="1" height="5"/><rect x="454" y="428" width="1" height="4"/><rect x="455" y="423" width="1" height="9"/><rect x="456" y="427" width="1" height="5"/><rect x="457" y="428" width="1" height="4"/><rect x="458" y="430" width="1" height="2"/><rect x="459" y="425" width="1" height="7"/><rect x="460" y="427" width="1" height="5"/><rect x="461" y="431" width="1" height="1"/><rect x="462" y="419" width="1" height="13"/><rect x="463" y="427" width="1" height="5"/><rect x="464" y="431" width="1" height="1"/><rect x="465" y="424" width="1" height="8"/><rect x="466" y="430" width="1" height="2"/><rect x="467" y="431" width="1" height="1"/><rect x="469" y="430" width="1" height="2"/><rect x="471" y="430" width="1" height="2"/><rect x="472" y="427" width="1" height="5"/><rect x="473" y="431" width="1" height="1"/><rect x="474" y="431" width="1" height="1"/><rect x="475" y="429" width="1" height="3"/><rect x="476" y="429" width="1" height="3"/><rect x="477" y="418" width="1" height="14"/><rect x="478" y="420" width="1" height="12"/><rect x="479" y="428" width="1" height="4"/><rect x="480" y="418" width="1" height="14"/><rect x="481" y="420" width="1" height="12"/><rect x="482" y="431" width="1" height="1"/><rect x="483" y="419" width="1" height="13"/><rect x="484" y="419" width="1" height="13"/><rect x="485" y="430" width="1" height="2"/><rect x="486" y="422" width="1" height="10"/><rect x="487" y="430" width="1" height="2"/><rect x="488" y="427" width="1" height="5"/><rect x="489" y="409" width="1" height="23"/><rect x="490" y="416" width="1" height="16"/><rect x="491" y="419" width="1" height="13"/><rect x="492" y="422" width="1" height="10"/><rect x="493" y="422" width="1" height="10"/><rect x="494" y="427" width="1" height="5"/><rect x="495" y="428" width="1" height="4"/><rect x="496" y="431" width="1" height="1"/><rect x="497" y="430" width="1" height="2"/><rect x="498" y="423" width="1" height="9"/><rect x="499" y="426" width="1" height="6"/><rect x="500" y="429" width="1" height="3"/><rect x="501" y="430" width="1" height="2"/><rect x="502" y="425" width="1" height="7"/><rect x="503" y="427" width="1" height="5"/><rect x="504" y="410" width="1" height="22"/><rect x="505" y="412" width="1" height="20"/><rect x="507" y="418" width="1" height="14"/><rect x="508" y="421" width="1" height="11"/><rect x="509" y="431" width="1" height="1"/><rect x="511" y="419" width="1" height="13"/><rect x="512" y="418" width="1" height="14"/><rect x="513" y="430" width="1" height="2"/><rect x="514" y="431" width="1" height="1"/><rect x="515" y="425" width="1" height="7"/><rect x="516" y="419" width="1" height="13"/><rect x="517" y="413" width="1" height="19"/><rect x="518" y="412" width="1" height="20"/><rect x="519" y="425" width="1" height="7"/><rect x="520" y="427" width="1" height="5"/><rect x="521" y="431" width="1" height="1"/><rect x="523" y="426" width="1" height="6"/><rect x="524" y="430" width="1" height="2"/><rect x="525" y="423" width="1" height="9"/><rect x="526" y="430" width="1" height="2"/><rect x="527" y="431" width="1" height="1"/><rect x="528" y="430" width="1" height="2"/><rect x="529" y="430" width="1" height="2"/><rect x="530" y="422" width="1" height="10"/><rect x="531" y="421" width="1" height="11"/><rect x="532" y="423" width="1" height="9"/><rect x="533" y="429" width="1" height="3"/><rect x="534" y="430" width="1" height="2"/><rect x="535" y="412" width="1" height="20"/><rect x="536" y="431" width="1" height="1"/><rect x="537" y="426" width="1" height="6"/><rect x="538" y="427" width="1" height="5"/><rect x="539" y="430" width="1" height="2"/><rect x="542" y="430" width="1" height="2"/><rect x="543" y="431" width="1" height="1"/><rect x="544" y="426" width="1" height="6"/><rect x="545" y="430" width="1" height="2"/><rect x="546" y="420" width="1" height="12"/><rect x="547" y="419" width="1" height="13"/><rect x="548" y="421" width="1" height="11"/><rect x="549" y="428" width="1" height="4"/><rect x="550" y="411" width="1" height="21"/><rect x="552" y="431" width="1" height="1"/><rect x="553" y="430" width="1" height="2"/><rect x="555" y="412" width="1" height="20"/><rect x="557" y="410" width="1" height="22"/><rect x="558" y="431" width="1" height="1"/><rect x="559" y="430" width="1" height="2"/><rect x="560" y="428" width="1" height="4"/><rect x="561" y="424" width="1" height="8"/><rect x="562" y="427" width="1" height="5"/><rect x="563" y="428" width="1" height="4"/><rect x="564" y="425" width="1" height="7"/><rect x="565" y="430" width="1" height="2"/><rect x="566" y="422" width="1" height="10"/><rect x="567" y="430" width="1" height="2"/><rect x="568" y="409" width="1" height="23"/><rect x="569" y="411" width="1" height="21"/><rect x="570" y="425" width="1" height="7"/><rect x="571" y="431" width="1" height="1"/><rect x="572" y="422" width="1" height="10"/><rect x="573" y="425" width="1" height="7"/><rect x="574" y="420" width="1" height="12"/><rect x="575" y="422" width="1" height="10"/><rect x="576" y="425" width="1" height="7"/><rect x="579" y="424" width="1" height="8"/><rect x="580" y="427" width="1" height="5"/><rect x="581" y="426" width="1" height="6"/><rect x="582" y="419" width="1" height="13"/><rect x="583" y="424" width="1" height="8"/><rect x="584" y="425" width="1" height="7"/><rect x="585" y="427" width="1" height="5"/><rect x="586" y="430" width="1" height="2"/><rect x="588" y="419" width="1" height="13"/><rect x="589" y="426" width="1" height="6"/><rect x="590" y="409" width="1" height="23"/><rect x="591" y="431" width="1" height="1"/><rect x="592" y="424" width="1" height="8"/><rect x="593" y="424" width="1" height="8"/><rect x="594" y="431" width="1" height="1"/><rect x="595" y="407" width="1" height="25"/><rect x="597" y="423" width="1" height="9"/><rect x="598" y="425" width="1" height="7"/><rect x="599" y="427" width="1" height="5"/><rect x="600" y="421" width="1" height="11"/><rect x="601" y="418" width="1" height="14"/><rect x="602" y="428" width="1" height="4"/><rect x="603" y="431" width="1" height="1"/><rect x="604" y="430" width="1" height="2"/><rect x="605" y="428" width="1" height="4"/><rect x="606" y="430" width="1" height="2"/><rect x="609" y="430" width="1" height="2"/><rect x="611" y="410" width="1" height="22"/><rect x="612" y="419" width="1" height="13"/><rect x="613" y="430" width="1" height="2"/><rect x="614" y="431" width="1" height="1"/><rect x="615" y="431" width="1" height="1"/><rect x="616" y="431" width="1" height="1"/><rect x="617" y="424" width="1" height="8"/></g>
<rect x="25.75" y="430.4" width="592.5" height="1.5" fill="#505050"/>
</svg>
<div class="yl" style="top:139.3px">-10.0</div><div class="yl" style="top:171.2px">-20.0</div><div class="yl" style="top:203.0px">-30.0</div><div class="yl" style="top:234.9px">-40.0</div><div class="yl" style="top:266.8px">-50.0</div><div class="yl" style="top:298.6px">-60.0</div><div class="yl" style="top:330.5px">-70.0</div><div class="yl" style="top:362.4px">-80.0</div><div class="yl" style="top:394.3px">-90.0</div>
<div class="t" style="left:3px;top:435px;font-size:9px;font-weight:bold;color:#fff">Center 4.000000000 GHz</div>
<div class="t" style="left:3px;top:446.5px;font-size:9px;font-weight:bold;color:#fff">Res BW 3.0 MHz</div>
<div class="t" style="left:271px;top:435px;font-size:9px;font-weight:bold;color:#fff">Video BW 3.0 MHz</div>
<div class="t" style="right:155px;top:435.5px;font-size:9px;font-weight:bold;color:#fff">Span 0 Hz</div>
<div class="t" style="right:155px;top:446.5px;font-size:9px;font-weight:bold;color:#fff">Sweep 171 ms (1001 pts)</div>
<div class="a" style="left:0;top:456px;width:620px;height:1px;background:#3da7db"></div>

<!-- bottom toolbar -->
<div class="a" style="left:0;top:457px;width:618px;height:26px;background:#1b1b1b"></div>
<div class="btn" style="left:3px;top:460px;width:23px;height:22px;background:#262626"></div>
<div class="btn" style="left:31px;top:460px;width:23px;height:22px;background:#262626"></div>
<div class="btn" style="left:59px;top:460px;width:23px;height:22px;background:#2e2e2e"></div>
<div class="btn" style="left:86px;top:460px;width:23px;height:22px;background:#262626"></div>
<div class="btn" style="left:114px;top:460px;width:23px;height:22px;background:#262626"></div>
<svg class="a" style="left:0;top:455px" width="140" height="30" viewBox="0 455 140 30">
<g fill="#e6e6e6">
<polygon points="7.5,466.3 13.8,465.4 13.8,470.6 7.5,470.6"/>
<polygon points="15,465.2 22.8,464 22.8,470.6 15,470.6"/>
<polygon points="7.5,471.8 13.8,471.8 13.8,477.2 7.5,476.3"/>
<polygon points="15,471.8 22.8,471.8 22.8,478.6 15,477.4"/>
</g>
<path d="M49.5 478.5 C51.5 472 48 466.5 42.5 466.5 C40 466.5 38.3 467.5 37 469" fill="none" stroke="#fff" stroke-width="2.4" stroke-linecap="round"/>
<polygon points="34,464.5 34,472.5 41.5,472" fill="#fff"/>
<path d="M63.5 478.5 C61.5 472 65 466.5 70.5 466.5 C73 466.5 74.7 467.5 76 469" fill="none" stroke="#8a8a8a" stroke-width="2.4" stroke-linecap="round"/>
<polygon points="79,464.5 79,472.5 71.5,472" fill="#8a8a8a"/>
<path d="M89.5 466 H95.5 L97 467.5 H106 V478.5 H89.5 Z" fill="#f2f2f2"/>
<text x="125.5" y="479.5" text-anchor="middle" font-family="Liberation Sans" font-weight="bold" font-size="20" fill="#f2f2f2">?</text>
</svg>
<div class="a" style="left:197px;top:460px;width:307px;height:22px;background:#1a1a1a;border:1px solid #4a4a4a;border-radius:3px 0 0 3px"></div>
<svg class="a" style="left:196px;top:458px" width="50" height="26" viewBox="196 458 50 26">
<ellipse cx="209.5" cy="470.2" rx="9.6" ry="7.2" fill="#585858"/>
<path d="M203 474.5 L201.5 479 L207 476" fill="#585858"/>
<circle cx="206.3" cy="470.2" r="0.9" fill="#ddd"/><circle cx="209.5" cy="470.2" r="0.9" fill="#ddd"/><circle cx="212.7" cy="470.2" r="0.9" fill="#ddd"/>
<path d="M229.6 462.5 L238.5 479.5 L221 479.5 Z" fill="none" stroke="#3a3a3a" stroke-width="1.2"/>
</svg>
<div class="btn" style="left:509px;top:460px;width:22px;height:22px;background:#0c0c0c"></div>
<div class="btn" style="left:537px;top:460px;width:22px;height:22px;background:#0c0c0c"></div>
<div class="btn" style="left:565px;top:460px;width:22px;height:22px;background:#0c0c0c"></div>
<div class="btn" style="left:593px;top:460px;width:22px;height:22px;background:#0c0c0c"></div>
<svg class="a" style="left:505px;top:455px" width="115" height="30" viewBox="505 455 115 30">
<g fill="#f0f0f0">
<rect x="518" y="463.5" width="4" height="3.5"/><rect x="526" y="463.5" width="4" height="3.5"/>
<rect x="512" y="472.5" width="4" height="3.5"/><rect x="519" y="472.5" width="4" height="3.5"/><rect x="526" y="472.5" width="4" height="3.5"/>
</g>
<g stroke="#f0f0f0" stroke-width="1"><path d="M522 465.2 H526 M520.5 467 V472.5 M516 474.2 H526"/></g>
<g fill="none" stroke="#bbb" stroke-width="1"><rect x="540.5" y="463.5" width="6.5" height="6.5"/><rect x="549.5" y="463.5" width="6.5" height="6.5"/><rect x="540.5" y="472.5" width="6.5" height="6.5"/><rect x="549.5" y="472.5" width="6.5" height="6.5"/></g>
<path d="M542.2 464.2 L547.5 469 L549.5 467.8 L551.5 469.5 L553.5 472 L554.5 475.5 L552 478 L549 477.5 L546.5 474.5 L545.5 471 L541.5 466 Z" fill="#e8e8e8"/><path d="M550.5 478.5 L554.5 475.5" stroke="#e8e8e8" stroke-width="1.6"/>
<g fill="none" stroke="#3c3c3c" stroke-width="1"><rect x="568.5" y="463.5" width="7" height="7"/><rect x="577.5" y="463.5" width="7" height="7"/><rect x="568.5" y="472.5" width="7" height="7"/><rect x="577.5" y="472.5" width="7" height="7"/></g>
<g stroke="#f0f0f0" stroke-width="1.1" fill="none" stroke-linecap="round">
<path d="M602.5 470 L598 465.5 M605.5 470 L610 465.5 M602.5 474 L598 478.5 M605.5 474 L610 478.5"/></g>
<g fill="#f0f0f0">
<path d="M596 463.5 L601.5 464.3 L596.8 469 Z"/><path d="M612 463.5 L606.5 464.3 L611.2 469 Z"/>
<path d="M596 480.5 L601.5 479.7 L596.8 475 Z"/><path d="M612 480.5 L606.5 479.7 L611.2 475 Z"/>
</g>
</svg>

<!-- right panel -->
<div class="a" style="left:620px;top:30px;width:152px;height:453px;background:#164a65;border-right:1px solid #0d3d57"></div>
<div class="a" style="left:618px;top:75px;width:2px;height:408px;background:#3da7db"></div>
<div class="a" style="left:622px;top:33px;width:97px;height:450px;background:#41a8da;border-radius:4px 4px 0 0"></div>
<div class="sk" style="top:35px;height:24px;padding-top:7px">Trigger</div>
<div class="a" style="left:719px;top:61px;width:53px;height:27px;border:3px solid #c80000;border-radius:4px;background:#41a8da"></div>
<div class="t" style="left:722px;top:64px;font-size:9px;color:#001030;line-height:11px">Gate<br>Source</div>
<div class="sk" style="top:91px;height:23px">Gate<br>Settings</div>
<div class="sk" style="top:119px;height:23px">Periodic<br>Sync Src</div>
<div class="sk" style="top:147px;height:23px">Auto/<br>Holdoff</div>

<div class="a" style="left:622px;top:34px;width:96px;height:32px;border:3px solid #c80000;border-radius:5px;background:#4a4a4a"></div>
<div class="t" style="left:626px;top:38px;font-size:9px;color:#fff">Select Gate Source</div>
<div class="t" style="left:628px;top:52px;font-size:9px;color:#fff">Periodic</div>
<div class="a" style="left:626px;top:61px;width:89px;height:2px;border:1px solid #5e5e5e;border-top:none"></div>
<div class="t" style="left:709px;top:52px;font-size:7px;color:#fff">&#9660;</div>

<div class="a" style="left:622px;top:67.5px;width:96px;height:32.5px;border:3px solid #c80000;border-radius:5px;background:#4a4a4a"></div>
<div class="t" style="left:626px;top:72px;font-size:9px;color:#fff">Period</div>
<div class="a" style="left:626px;top:82px;width:89px;height:14px;background:#151515;border:1px solid #3d78a8"></div>
<div class="t" style="left:628px;top:85px;font-size:9px;color:#fff">50.00000000 ms</div>

<div class="ctl" style="top:103px;height:31px"></div>
<div class="t" style="left:626px;top:105px;font-size:9px;color:#fff">Offset</div>
<div class="t" style="left:628px;top:119px;font-size:9px;color:#fff">0.000000 s</div>
<div class="a" style="left:627px;top:127px;width:88px;height:4px;border:1px solid #6e6e6e;border-top:none"></div>

<div class="ctl" style="top:137px;height:22px;border-radius:6px"></div>
<div class="t" style="left:625px;top:138px;width:91px;text-align:center;font-size:9px;line-height:10.5px;color:#fff">Reset Offset<br>Display</div>

<div class="ctl" style="top:162px;height:31px"></div>
<div class="t" style="left:626px;top:164px;font-size:9px;color:#fff">Sync Source</div>
<div class="t" style="left:628px;top:178px;font-size:9px;color:#fff">Off</div>
<div class="t" style="left:709px;top:178px;font-size:7px;color:#fff">&#9660;</div>
<div class="a" style="left:627px;top:186px;width:88px;height:4px;border:1px solid #6e6e6e;border-top:none"></div>

<div class="ctl" style="top:196px;height:22px;border-radius:6px"></div>
<div class="t" style="left:628px;top:197.5px;width:86px;text-align:center;font-size:9px;line-height:10.5px;color:#fff">Trigger Settings<br>Diagram</div>
<svg class="a" style="left:626px;top:199px" width="9" height="18"><polyline points="7,1.5 0.8,8 7,14.8" fill="none" stroke="#fff" stroke-width="1.3"/></svg>

<svg class="ann" style="left:623.8px;top:7.0px" width="24" height="24" viewBox="0 0 24 24"><circle cx="12" cy="12" r="8.75" fill="#000" stroke="#c80000" stroke-width="2.70"/><path d="M13.4 6.6 V17.4 M13.4 6.8 Q12.3 8.8 9.6 9.9" fill="none" stroke="#c80000" stroke-width="1.4"/></svg><svg class="ann" style="left:746.5px;top:61.6px" width="24" height="24" viewBox="0 0 24 24"><circle cx="12" cy="12" r="8.00" fill="#000" stroke="#c80000" stroke-width="2.50"/><text x="12" y="17.58" text-anchor="middle" font-family="Liberation Sans" font-size="15.5" fill="#c80000">2</text></svg><svg class="ann" style="left:599.5px;top:38.2px" width="24" height="24" viewBox="0 0 24 24"><circle cx="12" cy="12" r="8.65" fill="#000" stroke="#c80000" stroke-width="2.20"/><text x="12" y="17.04" text-anchor="middle" font-family="Liberation Sans" font-size="14.0" fill="#c80000">3</text></svg><svg class="ann" style="left:600.0px;top:71.8px" width="24" height="24" viewBox="0 0 24 24"><circle cx="12" cy="12" r="9.15" fill="#000" stroke="#c80000" stroke-width="2.30"/><text x="12" y="17.22" text-anchor="middle" font-family="Liberation Sans" font-size="14.5" fill="#c80000">4</text></svg>
<svg class="a" style="left:530px;top:430px" width="243" height="45" viewBox="530 430 243 45">
<g opacity="0.6">
<path d="M549.8 442.5 C554.8 442.5 558.8 446 558.8 450.5 C558.8 455 554.8 458.5 549.8 458.5 C548.3 458.5 547 458.2 545.8 457.8 L542.5 460 L543 456.5 C541.5 455 540.8 452.8 540.8 450.5 C540.8 446 544.8 442.5 549.8 442.5 Z" fill="#c8c8c8"/>
<path d="M559.5 452.6 C564 452.6 567.9 455.3 567.9 458.6 C567.9 460.5 566.8 462 565.2 463 L565.8 465.5 L562.8 464 C561.8 464.4 560.7 464.6 559.5 464.6 C555 464.6 551.2 461.9 551.2 458.6 C551.2 455.3 555 452.6 559.5 452.6 Z" fill="#d8d8d8" stroke="#555" stroke-width="0.5"/>
<circle cx="546.5" cy="448" r="1.1" fill="#333"/><circle cx="552.8" cy="448" r="1.1" fill="#333"/>
<circle cx="556.7" cy="456" r="1" fill="#222"/><circle cx="562" cy="456" r="1" fill="#222"/>
</g>
<g fill="none" stroke="#ffffff" stroke-opacity="0.5" stroke-width="1.3" stroke-linecap="round" stroke-linejoin="round">
<path transform="translate(576 444.5) scale(0.95 0.93)" d="M7.5 1.5 Q5 7 1 10.5 M12 1.5 Q14.5 7 19.5 10.5 M10 6.5 Q7 13 3.5 17.5 L16.5 16.8 M13 12 L17.5 19"/><path transform="translate(596 444.5) scale(0.95 0.93)" d="M10 1 Q9 6.5 2 10 M10 3.5 Q12.5 8 18.5 10 M6 9.5 Q5 15 1 19 M5.8 13 L9.5 18.5 M14 9.5 Q13.5 15 10 19 M14 13 L19 19"/><path transform="translate(619.5 444.5) scale(0.95 0.93)" d="M5 1.5 H15 V7 H5 Z M1 9.5 H19 M6 9.8 L4.8 13.5 H16 Q16 18.5 12 19.2"/><path transform="translate(663 444.5) scale(0.95 0.93)" d="M2 19 V1.5 H18 V18 Q18 19.2 16.3 19.2 M6 5.5 H14 M6.5 9 H13.5 V14.5 H6.5 Z"/><path transform="translate(684.5 444.5) scale(0.95 0.93)" d="M4.8 1 V7.5 M4.8 4 H8.5 M2.2 3 V7.5 M1 7.8 H9.5 M5.2 9 V13 M2.5 10 L1.5 12.5 M8 10 L9 11.5 M9 12.5 Q6.5 17.5 1 19.5 M10.5 1.5 H19 M14.5 1.5 L13.5 4 M11.5 4.5 H18.2 V14 M11.5 4.5 V14 M14.8 7 V12.5 Q14 16.5 10.5 19.5 M16 15.5 L19.5 19.5"/><path transform="translate(706 444.5) scale(0.95 0.93)" d="M1 3 H8 Q6.5 12 1 18.5 M2.5 7 Q5 13 9 18 M10.5 2 H18.5 V12 M10.5 2 V12 M14.5 5 V10 Q13.5 16 9.5 19.5 M16 10 V17 Q16 18.8 18 18.8 H19.5 V16.5"/><path transform="translate(728 444.5) scale(0.95 0.93)" d="M1.5 2.5 L3 4.5 M1 7.5 L2.5 9.5 M1 18.5 L3.5 13 M5.5 2 H11.5 V13 M5.5 2 V13 M8.5 5 V11 Q8 15.5 4.5 19 M9.5 14 L12.5 18.5 M14.5 4 V14 M18.5 1.5 V17.8 Q18.5 19.2 16.8 19.2"/>
<circle cx="648.8" cy="454.7" r="0.9" fill="#fff" fill-opacity="0.6" stroke="none"/>
</g>
</svg>

</body></html>
